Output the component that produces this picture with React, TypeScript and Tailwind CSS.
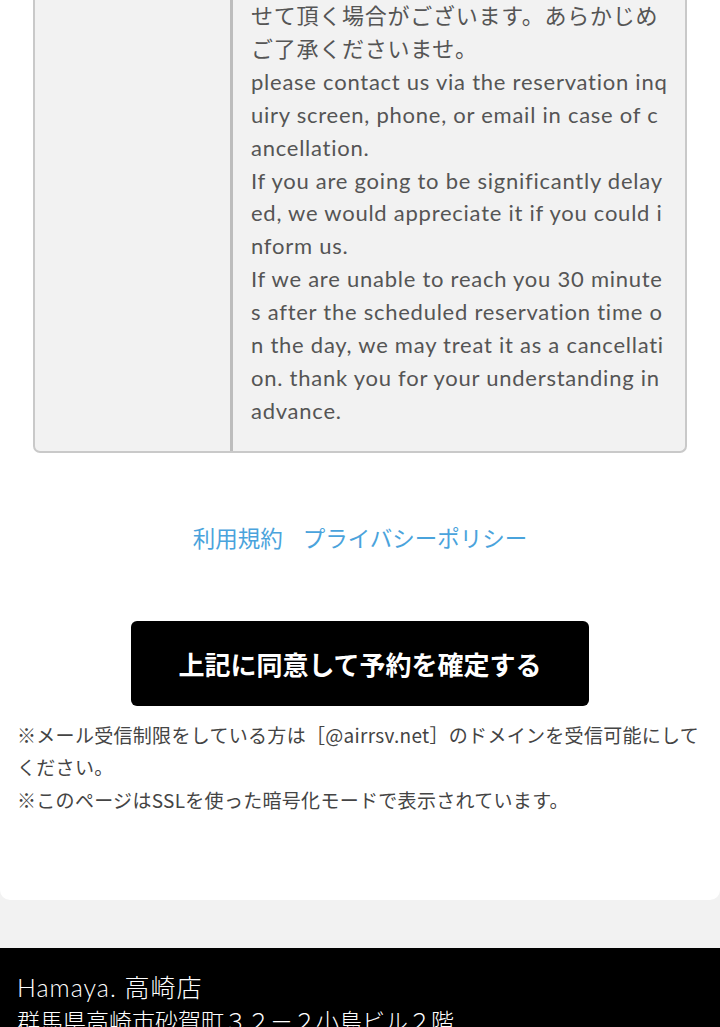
const tableLines = [
  "せて頂く場合がございます。あらかじめ",
  "ご了承くださいませ。",
  "please contact us via the reservation inq",
  "uiry screen, phone, or email in case of c",
  "ancellation.",
  "If you are going to be significantly delay",
  "ed, we would appreciate it if you could i",
  "nform us.",
  "If we are unable to reach you 30 minute",
  "s after the scheduled reservation time o",
  "n the day, we may treat it as a cancellati",
  "on. thank you for your understanding in",
  "advance.",
];

export default function App() {
  return (
    <div
      className="min-h-screen bg-[#f2f2f2]"
      style={{ fontFamily: "Lato, 'Noto Sans CJK JP', sans-serif" }}
    >
      <div className="bg-white rounded-b-[10px] pb-[84px]">
        <div className="px-[33px]">
          <div className="flex border-2 border-t-0 border-[#c9c9c9] rounded-b-[7px] bg-[#f2f2f2]">
            <div className="w-[198px] shrink-0 border-r-[3px] border-[#bdbdbd]" />
            <div className="flex-1 pl-[18px] pr-[12px] pb-[23px] text-[22px] leading-[32.9px] tracking-[0.75px] text-[#555555]">
              {tableLines.map((line, i) => (
                <div key={i} className="whitespace-nowrap">
                  {line}
                </div>
              ))}
            </div>
          </div>
        </div>

        <div className="flex justify-center gap-[20px] mt-[74px] text-[22.5px] leading-[24px] text-[#4aa3dc]">
          <a href="#">利用規約</a>
          <a href="#">プライバシーポリシー</a>
        </div>

        <div className="flex justify-center mt-[70px]">
          <button
            className="w-[458px] h-[85px] rounded-[6px] bg-black text-white text-[26px] font-semibold"
            style={{ fontFamily: "'Noto Sans CJK JP', sans-serif" }}
          >
            上記に同意して予約を確定する
          </button>
        </div>

        <div
          className="mt-[13px] px-[17px] text-[19px] leading-[32.5px] tracking-[0.3px] text-[#444444]"
          style={{ fontFamily: "'Noto Sans CJK JP', sans-serif" }}
        >
          <p>※メール受信制限をしている方は［@airrsv.net］のドメインを受信可能にしてください。</p>
          <p>※このページはSSLを使った暗号化モードで表示されています。</p>
        </div>
      </div>

      <div className="h-[48px]" />

      <footer className="bg-black text-white px-[17px] pt-[22px] pb-[20px]">
        <div className="text-[25px] leading-[34px] font-light tracking-[1px]">Hamaya. 高崎店</div>
        <div
          className="text-[23px] leading-[32px] font-light"
          style={{ fontFamily: "'Noto Sans CJK JP', sans-serif" }}
        >
          群馬県高崎市砂賀町３２－２小島ビル２階
        </div>
      </footer>
    </div>
  );
}
